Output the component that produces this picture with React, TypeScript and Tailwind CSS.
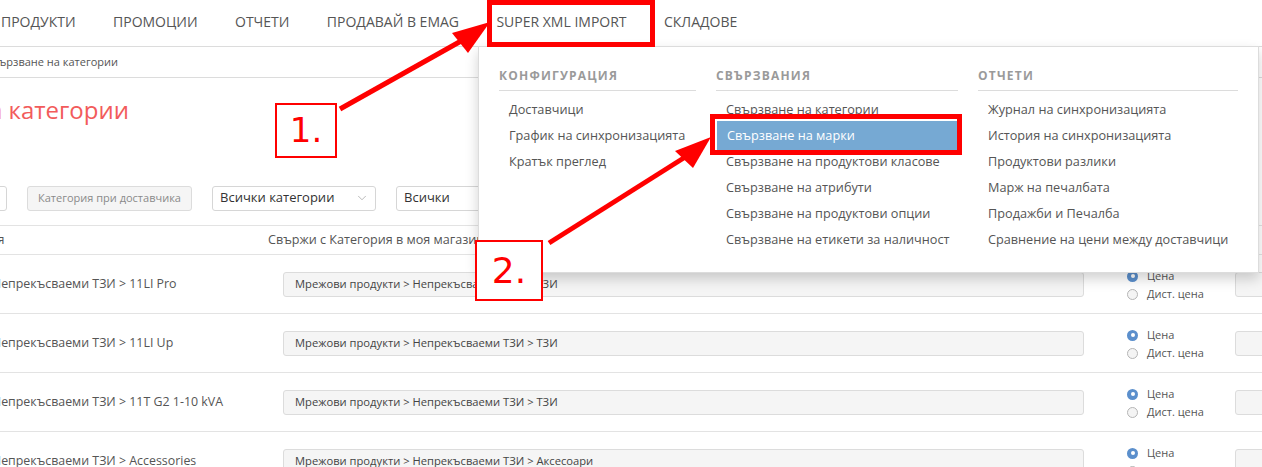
import { ChevronDown } from "lucide-react";

const navItems = ["Продукти", "Промоции", "Отчети", "Продавай в eMAG", "Super XML Import", "Складове"];

const menuColumns = [
  {
    title: "Конфигурация",
    width: "w-[197px]",
    items: ["Доставчици", "График на синхронизацията", "Кратък преглед"],
  },
  {
    title: "Свързвания",
    width: "w-[242px]",
    items: [
      "Свързване на категории",
      "Свързване на марки",
      "Свързване на продуктови класове",
      "Свързване на атрибути",
      "Свързване на продуктови опции",
      "Свързване на етикети за наличност",
    ],
  },
  {
    title: "Отчети",
    width: "w-[260px]",
    items: [
      "Журнал на синхронизацията",
      "История на синхронизацията",
      "Продуктови разлики",
      "Марж на печалбата",
      "Продажби и Печалба",
      "Сравнение на цени между доставчици",
    ],
  },
];

const rows = [
  { source: "Непрекъсваеми ТЗИ > 11LI Pro", target: "Мрежови продукти > Непрекъсваеми ТЗИ > ТЗИ" },
  { source: "Непрекъсваеми ТЗИ > 11LI Up", target: "Мрежови продукти > Непрекъсваеми ТЗИ > ТЗИ" },
  { source: "Непрекъсваеми ТЗИ > 11T G2 1-10 kVA", target: "Мрежови продукти > Непрекъсваеми ТЗИ > ТЗИ" },
  { source: "Непрекъсваеми ТЗИ > Accessories", target: "Мрежови продукти > Непрекъсваеми ТЗИ > Аксесоари" },
];

function Radio({ checked, label }: { checked?: boolean; label: string }) {
  return (
    <div className="flex items-center gap-[9px] h-[18px]">
      {checked ? (
        <span className="w-[11px] h-[11px] shrink-0 rounded-full bg-[#5b8fcc] flex items-center justify-center">
          <span className="w-[4px] h-[4px] rounded-full bg-white" />
        </span>
      ) : (
        <span className="w-[11px] h-[11px] shrink-0 rounded-full border border-[#b5b5b5] bg-[#f4f4f4]" />
      )}
      <span className="text-[11px] text-[#555] whitespace-nowrap">{label}</span>
    </div>
  );
}

function DropdownMenu() {
  return (
    <div className="absolute left-[478px] top-[46px] w-[781px] h-[227px] bg-white border border-[#dcdcdc] shadow-[0_6px_12px_rgba(0,0,0,0.18)] pl-[20px] pt-[21px] flex gap-[20px]">
      {menuColumns.map((col) => (
        <div key={col.title} className={`${col.width} shrink-0`}>
          <div className="text-[12px] leading-[16px] font-bold uppercase tracking-[1.2px] text-[#9a9a9a] pb-[6px] border-b border-[#dcdcdc] whitespace-nowrap">
            {col.title}
          </div>
          <ul className="mt-[6px]">
            {col.items.map((item) =>
              item === "Свързване на марки" ? (
                <li
                  key={item}
                  className="h-[30px] -my-[2px] flex items-center pl-[10px] ml-[1px] text-[12.7px] text-white bg-[#76a9d3] whitespace-nowrap"
                >
                  {item}
                </li>
              ) : (
                <li key={item} className="h-[26px] flex items-center pl-[10px] text-[12.7px] text-[#555] whitespace-nowrap">
                  {item}
                </li>
              )
            )}
          </ul>
        </div>
      ))}
    </div>
  );
}

function Annotations() {
  return (
    <>
      {/* red frames */}
      <div className="absolute left-[487px] top-0 w-[168px] h-[47px] border-[5px] border-[#ff0000]" />
      <div className="absolute left-[710px] top-[114px] w-[252px] h-[41px] border-[5px] border-[#ff0000]" />

      <svg className="absolute inset-0 pointer-events-none" width={1262} height={467}>
        <line x1={340} y1={109} x2={470} y2={36} stroke="#ff0000" strokeWidth={5} />
        <polygon points="490,22 452,33 468,53" fill="#ff0000" />
        <line x1={549} y1={243} x2={690} y2={154} stroke="#ff0000" strokeWidth={5} />
        <polygon points="711,137 675,151 693,168" fill="#ff0000" />
      </svg>

      <div className="absolute left-[275px] top-[103px] w-[62px] h-[55px] border-2 border-[#ff0000] bg-white flex items-center justify-center text-[34px] text-[#ff0000] font-['DejaVu_Sans',sans-serif]">
        1.
      </div>
      <div className="absolute left-[475px] top-[240px] w-[68px] h-[61px] border-2 border-[#ff0000] bg-white flex items-center justify-center text-[36px] text-[#ff0000] font-['DejaVu_Sans',sans-serif]">
        2.
      </div>
    </>
  );
}

export default function App() {
  return (
    <div className="relative w-[1262px] h-[467px] overflow-hidden bg-white font-['Open_Sans',sans-serif] text-[#555]">
      {/* top nav */}
      <nav className="h-[47px] border-b border-[#dcdcdc] flex items-center pl-[1px] pb-[4px] gap-[37.4px] text-[14px] uppercase text-[#555] whitespace-nowrap">
        {navItems.map((item) => (
          <span key={item}>{item}</span>
        ))}
      </nav>

      {/* breadcrumb */}
      <div className="h-[31px] border-b border-[#dcdcdc] flex items-center">
        <div className="w-[118px] overflow-hidden flex justify-end whitespace-nowrap text-[11px] text-[#555]">
          <span>Свързване на категории</span>
        </div>
      </div>

      {/* title */}
      <div className="pt-[16px] h-[107px]">
        <div className="w-[129px] overflow-hidden flex justify-end whitespace-nowrap text-[24px] leading-[32px] text-[#f25b5b]">
          <span>Свързване на категории</span>
        </div>
      </div>

      {/* filters */}
      <div className="flex items-center gap-[20px] h-[26px]">
        <div className="w-[20px] shrink-0 -ml-[13px] h-[25px] border border-[#d6d6d6] rounded-[3px] bg-white" />
        <div className="w-[165px] shrink-0 h-[25px] border border-[#dcdcdc] rounded-[3px] bg-[#f5f5f5] flex items-center justify-center text-[11px] text-[#8a8a8a] whitespace-nowrap">
          Категория при доставчика
        </div>
        <div className="w-[164px] shrink-0 h-[25px] border border-[#d6d6d6] rounded-[3px] bg-white flex items-center justify-between pl-[7px] pr-[6px] text-[13px] text-[#333] whitespace-nowrap">
          <span>Всички категории</span>
          <ChevronDown size={14} strokeWidth={1} className="text-[#888]" />
        </div>
        <div className="w-[160px] shrink-0 h-[25px] border border-[#d6d6d6] rounded-[3px] bg-white flex items-center pl-[7px] text-[13px] text-[#333]">
          Всички
        </div>
      </div>

      {/* table header */}
      <div className="mt-[14px] h-[30px] border-t border-b border-[#e3e3e3] flex items-center text-[12.6px] text-[#555]">
        <div className="w-[268px] shrink-0 overflow-hidden">
          <span className="block -ml-[59px] whitespace-nowrap">Категория</span>
        </div>
        <div className="whitespace-nowrap">Свържи с Категория в моя магазин</div>
      </div>

      {/* rows */}
      {rows.map((row, i) => (
        <div key={i} className="h-[59px] border-b border-[#e3e3e3] flex items-center">
          <div className="w-[283px] shrink-0 overflow-hidden text-[12.4px] text-[#555] whitespace-nowrap pt-[1px]">
            <span className="block -ml-[8px]">{row.source}</span>
          </div>
          <div className="w-[801px] shrink-0 h-[25px] border border-[#dcdcdc] rounded-[3px] bg-[#f5f5f5] flex items-center pl-[11px] text-[11.2px] text-[#444] whitespace-nowrap">
            {row.target}
          </div>
          <div className="ml-[43px] w-[108px] shrink-0 flex flex-col pt-[2px]">
            <Radio checked label="Цена" />
            <Radio label="Дист. цена" />
          </div>
          <div className="w-[60px] shrink-0 h-[25px] border border-[#dcdcdc] rounded-[3px] bg-[#f5f5f5]" />
        </div>
      ))}

      <DropdownMenu />
      <Annotations />
    </div>
  );
}
